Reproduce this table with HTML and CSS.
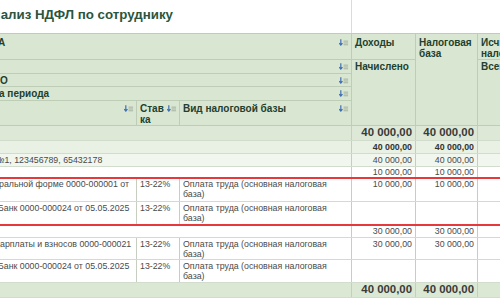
FILE: index.html
```html
<!DOCTYPE html>
<html lang="ru">
<head>
<meta charset="utf-8">
<title>Анализ НДФЛ по сотруднику</title>
<link rel="stylesheet" href="styles.css">
</head>
<body>
<div class="page">
  <div class="top">
    <div class="title-pane"><h1 class="title">Анализ НДФЛ по сотруднику</h1></div>
    <div class="top-rest"></div>
  </div>
  <div class="grid-wrap">
    <table class="report">
      <colgroup>
        <col class="c1"><col class="c2"><col class="c3"><col class="c4"><col class="c5"><col class="c6">
      </colgroup>
      <thead>
        <tr class="h1">
          <th colspan="3"><div class="hc"><span class="cut5">А</span><svg class="sort" viewBox="0 0 11 7"><path d="M2 0V6M0.2 4.2L2 6.4L3.8 4.2" stroke="#3d6fb5" stroke-width="1.3" fill="none"/><path d="M5 2H10M5 4H10M5 6H10" stroke="#9aa596" stroke-width="0.9"/></svg></div></th>
          <th>Доходы</th>
          <th rowspan="5">Налоговая база</th>
          <th>Исчисленный налог</th>
        </tr>
        <tr class="h2">
          <th colspan="3"><div class="hc"><span></span><svg class="sort" viewBox="0 0 11 7"><path d="M2 0V6M0.2 4.2L2 6.4L3.8 4.2" stroke="#3d6fb5" stroke-width="1.3" fill="none"/><path d="M5 2H10M5 4H10M5 6H10" stroke="#9aa596" stroke-width="0.9"/></svg></div></th>
          <th rowspan="4">Начислено</th>
          <th rowspan="4">Всего</th>
        </tr>
        <tr class="h3">
          <th colspan="3"><div class="hc"><span class="cut3">О</span><svg class="sort" viewBox="0 0 11 7"><path d="M2 0V6M0.2 4.2L2 6.4L3.8 4.2" stroke="#3d6fb5" stroke-width="1.3" fill="none"/><path d="M5 2H10M5 4H10M5 6H10" stroke="#9aa596" stroke-width="0.9"/></svg></div></th>
        </tr>
        <tr class="h4">
          <th colspan="3"><div class="hc"><span class="cut4">а периода</span><svg class="sort" viewBox="0 0 11 7"><path d="M2 0V6M0.2 4.2L2 6.4L3.8 4.2" stroke="#3d6fb5" stroke-width="1.3" fill="none"/><path d="M5 2H10M5 4H10M5 6H10" stroke="#9aa596" stroke-width="0.9"/></svg></div></th>
        </tr>
        <tr class="h5">
          <th><div class="hc"><span></span><svg class="sort" viewBox="0 0 11 7"><path d="M2 0V6M0.2 4.2L2 6.4L3.8 4.2" stroke="#3d6fb5" stroke-width="1.3" fill="none"/><path d="M5 2H10M5 4H10M5 6H10" stroke="#9aa596" stroke-width="0.9"/></svg></div></th>
          <th><div class="hc"><span class="brk">Ставка</span><svg class="sort" viewBox="0 0 11 7"><path d="M2 0V6M0.2 4.2L2 6.4L3.8 4.2" stroke="#3d6fb5" stroke-width="1.3" fill="none"/><path d="M5 2H10M5 4H10M5 6H10" stroke="#9aa596" stroke-width="0.9"/></svg></div></th>
          <th><div class="hc"><span>Вид налоговой базы</span><svg class="sort" viewBox="0 0 11 7"><path d="M2 0V6M0.2 4.2L2 6.4L3.8 4.2" stroke="#3d6fb5" stroke-width="1.3" fill="none"/><path d="M5 2H10M5 4H10M5 6H10" stroke="#9aa596" stroke-width="0.9"/></svg></div></th>
        </tr>
      </thead>
      <tbody>
        <tr class="ga">
          <td colspan="3"></td>
          <td class="num">40 000,00</td>
          <td class="num">40 000,00</td>
          <td></td>
        </tr>
        <tr class="gb">
          <td colspan="3"></td>
          <td class="num">40 000,00</td>
          <td class="num">40 000,00</td>
          <td></td>
        </tr>
        <tr class="gc">
          <td colspan="3" class="first"><span class="cut6">№1, 123456789, 65432178</span></td>
          <td class="num">40 000,00</td>
          <td class="num">40 000,00</td>
          <td></td>
        </tr>
        <tr class="gd">
          <td colspan="3"></td>
          <td class="num">10 000,00</td>
          <td class="num">10 000,00</td>
          <td></td>
        </tr>
        <tr class="det de">
          <td class="first"><span class="cut1">ральной форме 0000-000001 от</span></td>
          <td>13-22%</td>
          <td>Оплата труда (основная налоговая база)</td>
          <td class="num">10 000,00</td>
          <td class="num">10 000,00</td>
          <td></td>
        </tr>
        <tr class="det df">
          <td class="first"><span class="cut2">Банк 0000-000024 от 05.05.2025</span></td>
          <td>13-22%</td>
          <td>Оплата труда (основная налоговая база)</td>
          <td></td>
          <td></td>
          <td></td>
        </tr>
        <tr class="gd gg">
          <td colspan="3"></td>
          <td class="num">30 000,00</td>
          <td class="num">30 000,00</td>
          <td></td>
        </tr>
        <tr class="det dh">
          <td class="first"><span>арплаты и взносов 0000-000021</span></td>
          <td>13-22%</td>
          <td>Оплата труда (основная налоговая база)</td>
          <td class="num">30 000,00</td>
          <td class="num">30 000,00</td>
          <td></td>
        </tr>
        <tr class="det di">
          <td class="first"><span class="cut2">Банк 0000-000024 от 05.05.2025</span></td>
          <td>13-22%</td>
          <td>Оплата труда (основная налоговая база)</td>
          <td></td>
          <td></td>
          <td></td>
        </tr>
        <tr class="tot">
          <td colspan="3"></td>
          <td class="num">40 000,00</td>
          <td class="num">40 000,00</td>
          <td></td>
        </tr>
      </tbody>
    </table>
    <div class="highlight"></div>
  </div>
</div>
</body>
</html>
```

FILE: styles.css
```css
html, body {
  margin: 0;
  padding: 0;
  background: #ffffff;
  font-family: "Liberation Sans", Arial, sans-serif;
}

.page {
  width: 500px;
  height: 300px;
  overflow: hidden;
}

.top {
  display: flex;
  height: 33px;
}

.title-pane {
  width: 352px;
  flex: none;
  border-right: 1px solid #d9dcd8;
  box-sizing: border-box;
  overflow: hidden;
}

.title {
  margin: 0 0 0 -17px;
  padding-top: 7px;
  font-size: 13.3px;
  line-height: 16px;
  font-weight: bold;
  color: #2a5540;
  white-space: nowrap;
}

.top-rest {
  flex: 1;
}

.grid-wrap {
  position: relative;
  width: 560px;
}

.report {
  border-collapse: collapse;
  table-layout: fixed;
  width: 557px;
  margin-left: -1px;
}

.c1 { width: 137px; }
.c2 { width: 43px; }
.c3 { width: 172px; }
.c4 { width: 64px; }
.c5 { width: 62px; }
.c6 { width: 79px; }

th, td {
  box-sizing: border-box;
}

th {
  background: #d9e7d2;
  border: 1px solid #bdcdb6;
  color: #22402e;
  font-size: 10px;
  font-weight: bold;
  line-height: 11px;
  text-align: left;
  vertical-align: top;
  padding: 3px 2px 0 3px;
  overflow: hidden;
}

.hc {
  display: flex;
  justify-content: space-between;
  align-items: flex-start;
}

.hc span {
  min-width: 0;
}

.sort {
  width: 10px;
  height: 7px;
  flex: none;
  margin-top: 2px;
}

.brk {
  overflow-wrap: anywhere;
}

.cut3 { margin-left: -3px; }
.cut4 { margin-left: -4px; }
.cut5 { margin-left: -5px; }

.h1 { height: 26px; }
.h2 { height: 14px; }
.h3 { height: 13px; }
.h4 { height: 14px; }
.h5 { height: 25px; }

.h2 th, .h3 th, .h4 th { padding-top: 1px; }
.h5 th { padding-top: 2px; }

td {
  border: 1px solid #d2dccd;
  border-left-color: #c6cec2;
  border-right-color: #c6cec2;
  font-size: 8.8px;
  line-height: 10px;
  color: #4a4a4a;
  vertical-align: top;
  padding: 1px 3px 0 3px;
  white-space: normal;
  overflow: hidden;
}

td.first {
  padding-left: 0;
  white-space: nowrap;
}

td .cut1 { margin-left: -1px; }
td .cut2 { margin-left: -2px; }
td .cut6 { margin-left: -5px; }

td.num {
  text-align: right;
  white-space: nowrap;
}

.ga { height: 15px; }
.ga td { background: #dde9d6; padding-top: 0; }
.ga td.num, .tot td.num {
  font-size: 11.4px;
  font-weight: bold;
  color: #3a3a3a;
  line-height: 13px;
}

.gb { height: 13px; }
.gb td { background: #e8f1e4; }
.gb td.num { font-weight: bold; color: #333; }

.gc { height: 13px; }
.gc td { background: #f1f6ee; }

.gd { height: 11px; }
.gd td { background: #ffffff; padding-top: 0; }
.gg { height: 12px; }

.de, .df { height: 24px; }
.dh { height: 22px; }
.di { height: 23px; }

.tot { height: 15px; }
.tot td { background: #dbe8d3; padding-top: 0; }

.highlight {
  position: absolute;
  left: -10px;
  right: -10px;
  top: 144px;
  height: 49px;
  border: 2px solid #e5393c;
  box-sizing: border-box;
  pointer-events: none;
}
```
